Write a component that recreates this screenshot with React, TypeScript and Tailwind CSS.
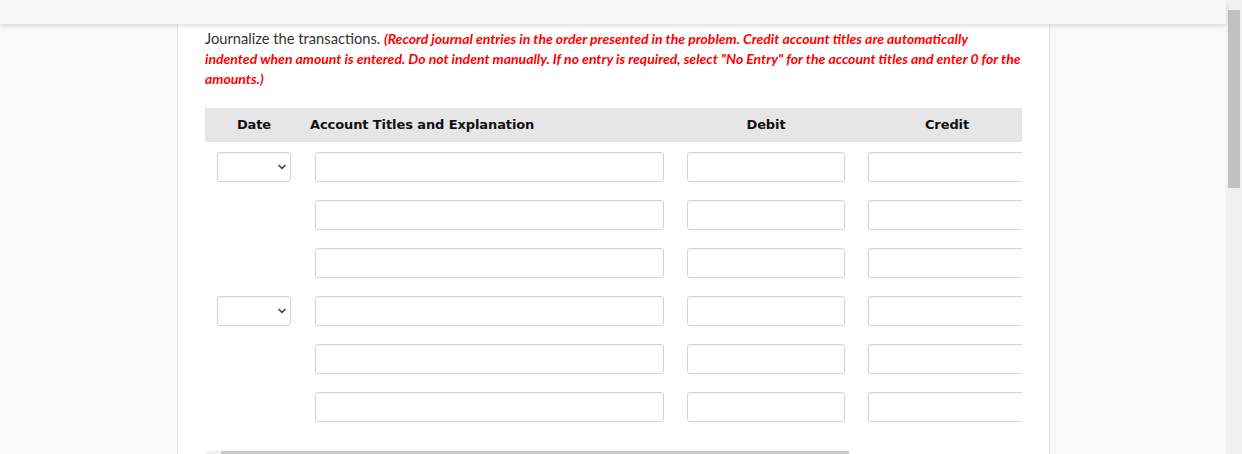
import React from 'react';
import { ChevronDown } from 'lucide-react';

const rows = [true, false, false, true, false, false];

const inputCls =
  'h-[30px] bg-white border border-[#d5d5d5] rounded-[3px] shadow-[inset_0_1px_1px_rgba(0,0,0,0.04)]';

const DateSelect = () => (
  <div className={`${inputCls} w-[74px] ml-[12px] flex items-center justify-end pr-[2px]`}>
    <ChevronDown size={12} strokeWidth={3.5} className="text-[#4a4a4a]" />
  </div>
);

const App = () => {
  return (
    <div className="flex h-[454px] w-full overflow-hidden bg-[#f9f9f9]">
      <div className="flex-1 flex flex-col min-w-0">
        <div className="h-[24px] shrink-0 bg-[#f7f7f7] shadow-[0_2px_4px_rgba(0,0,0,0.13)] relative z-10" />
        <div className="flex flex-1 min-h-0">
          <div className="w-[177px] shrink-0" />
          <main className="w-[873px] shrink-0 bg-white border-x border-[#e4e4e4] px-[27px] pt-[4px] flex flex-col">
            <p className="text-[14px] leading-[20px] text-[#333] font-['Lato',sans-serif] w-[830px] shrink-0">
              <span className="text-[14.7px]">Journalize the transactions.</span>{' '}
              <span className="text-[#ff0000] italic font-bold">
                (Record journal entries in the order presented in the problem. Credit account titles are
                automatically
                <br />
                indented when amount is entered. Do not indent manually. If no entry is required, select
                "No Entry" for the account titles and enter 0 for the
                <br />
                amounts.)
              </span>
            </p>

            <div className="mt-[19px] w-[817px] overflow-hidden shrink-0">
              <div className="flex h-[34px] items-center bg-[#e6e6e6] text-[13px] tracking-[-0.1px] font-bold text-[#111] font-['DejaVu_Sans',Tahoma,sans-serif] w-[821px]">
                <div className="w-[98px] shrink-0 text-center">Date</div>
                <div className="w-[361px] shrink-0 pl-[7px]">Account Titles and Explanation</div>
                <div className="w-[158px] shrink-0 ml-[23px] text-center">Debit</div>
                <div className="w-[158px] shrink-0 ml-[23px] text-center">Credit</div>
              </div>

              <div className="flex flex-col gap-[18px] mt-[10px] w-[821px]">
                {rows.map((hasDate, i) => (
                  <div key={i} className="flex">
                    <div className="w-[110px] shrink-0">{hasDate && <DateSelect />}</div>
                    <div className={`${inputCls} w-[349px] shrink-0`} />
                    <div className={`${inputCls} w-[158px] shrink-0 ml-[23px]`} />
                    <div className={`${inputCls} w-[158px] shrink-0 ml-[23px]`} />
                  </div>
                ))}
              </div>
            </div>

            <div className="mt-[29px] h-[3px] w-[643px] ml-[1px] bg-[#efefef] flex shrink-0">
              <div className="ml-[15px] flex-1 bg-[#c8c8c8]" />
            </div>
          </main>
        </div>
      </div>
      <div className="w-[16px] shrink-0 bg-[#f1f1f1] pt-[10px] px-[2px]">
        <div className="h-[178px] bg-[#c1c1c1]" />
      </div>
    </div>
  );
};

export default App;
